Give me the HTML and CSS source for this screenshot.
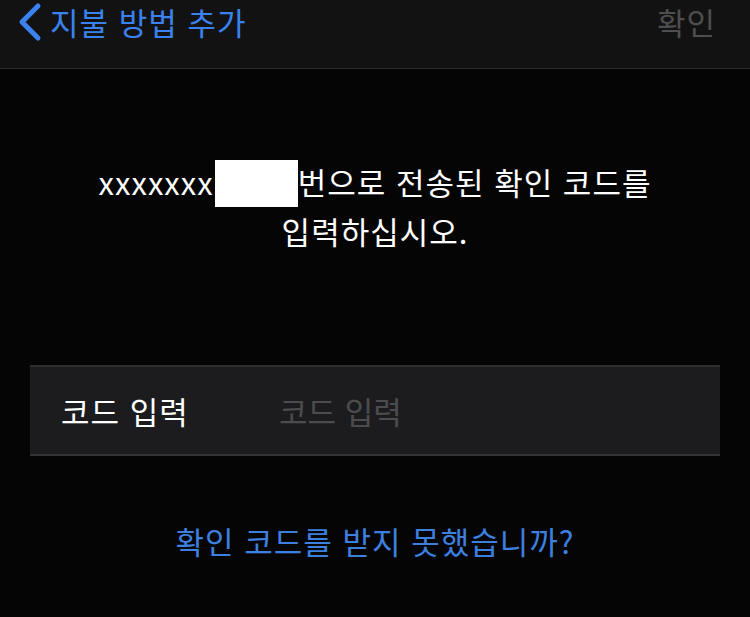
FILE: index.html
```html
<!DOCTYPE html>
<html lang="ko">
<head>
  <meta charset="UTF-8">
  <meta name="viewport" content="width=device-width, initial-scale=1.0">
  <title>지불 방법 추가</title>
  <link rel="stylesheet" href="styles.css">
</head>
<body>
  <header class="nav">
    <a class="back" href="#">
      <svg class="chev" width="26" height="40" viewBox="0 0 26 40"><path d="M22 4 L6 20 L22 36" fill="none" stroke="#3b82f0" stroke-width="5" stroke-linecap="round" stroke-linejoin="round"/></svg>
      <span>지불 방법 추가</span>
    </a>
    <span class="done">확인</span>
  </header>

  <main>
    <p class="msg">xxxxxxx<span class="mask"></span>번으로 전송된 확인 코드를<br>입력하십시오.</p>

    <div class="field">
      <label for="code">코드 입력</label>
      <input id="code" type="text" placeholder="코드 입력">
    </div>

    <a class="resend" href="#">확인 코드를 받지 못했습니까?</a>
  </main>
</body>
</html>
```

FILE: styles.css
```css
*{margin:0;padding:0;box-sizing:border-box;}
body{background:#050505;color:#fff;font-family:"Noto Sans CJK KR","Noto Sans",sans-serif;font-size:31px;letter-spacing:1px;}
.nav{display:flex;justify-content:space-between;align-items:center;height:69px;padding:0 34px 24px 16px;background:#121212;border-bottom:1px solid #2a2a2a;}
.back{display:flex;align-items:center;gap:8px;color:#3b82f0;text-decoration:none;line-height:40px;}
.chev{display:block;}
.done{color:#4e4e4e;line-height:40px;}
main{display:flex;flex-direction:column;align-items:center;}
.msg{margin-top:89px;text-align:center;line-height:48px;}
.mask{display:inline-block;width:83px;height:47px;margin-left:1px;background:#fff;vertical-align:-12px;}
.field{display:flex;align-items:center;width:690px;height:91px;margin-top:110px;padding:0 31px;background:#1c1c1e;border-top:2px solid #2e2e30;border-bottom:2px solid #333;}
.field label{width:218px;}
.field input{flex:1;border:0;outline:0;background:transparent;color:#fff;font:inherit;}
.field input::placeholder{color:#4c4c4e;}
.resend{margin-top:61px;color:#3d80e0;text-decoration:none;line-height:48px;}
```
